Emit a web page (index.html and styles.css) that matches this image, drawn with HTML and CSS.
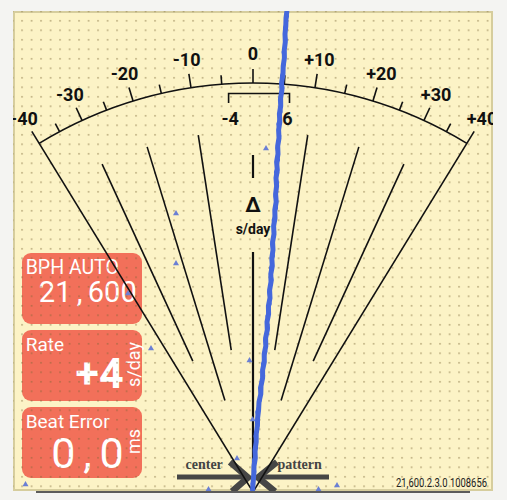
FILE: index.html
```html
<!DOCTYPE html>
<html>
<head>
<meta charset="utf-8">
<link rel="stylesheet" href="styles.css">
</head>
<body>
<div class="panel">
  <div class="cards">
    <div class="card">
      <div class="main">
        <div class="label label-bph">BPH AUTO</div>
        <div class="value v-bph">21<span class="sep">,</span>600</div>
      </div>
    </div>
    <div class="card">
      <div class="main">
        <div class="label">Rate</div>
        <div class="value v-rate">+4</div>
      </div>
      <div class="unit">s/day</div>
    </div>
    <div class="card">
      <div class="main">
        <div class="label">Beat Error</div>
        <div class="value v-beat">0<span class="sep">,</span>0</div>
      </div>
      <div class="unit">ms</div>
    </div>
  </div>

  <svg class="dial" viewBox="13 11 480 480" xmlns="http://www.w3.org/2000/svg">
    <defs>
      <pattern id="dots" x="21.2" y="19.9" width="9.5" height="9.5" patternUnits="userSpaceOnUse">
        <rect x="0" y="0" width="1.7" height="1.7" class="dot"/>
      </pattern>
    </defs>
    <rect x="13" y="11" width="480" height="480" fill="url(#dots)"/>

    <!-- bottom arrows -->
    <g class="arrows">
      <line x1="177" y1="477" x2="243" y2="477"/>
      <polyline points="230,462 248,477.5 232,491.5"/>
      <line x1="263" y1="477" x2="329" y2="477"/>
      <polyline points="277,462 258,477.5 275,491.5"/>
    </g>
    <text class="serif" x="185.5" y="469.3">center</text>
    <text class="serif" x="277.5" y="469.3">pattern</text>

    <!-- scale arc and ticks -->
    <g class="scale">
      <path d="M39.13 143.37 A409 409 0 0 1 466.87 143.37"/>
      <line x1="253" y1="83" x2="253" y2="69"/>
      <line x1="284.27" y1="84.20" x2="284.96" y2="75.22"/>
      <line x1="221.73" y1="84.20" x2="221.04" y2="75.22"/>
      <line x1="315.00" y1="87.73" x2="317.13" y2="73.89"/>
      <line x1="191.00" y1="87.73" x2="188.87" y2="73.89"/>
      <line x1="344.70" y1="93.41" x2="346.72" y2="84.64"/>
      <line x1="161.30" y1="93.41" x2="159.28" y2="84.64"/>
      <line x1="372.94" y1="100.98" x2="377.05" y2="87.59"/>
      <line x1="133.06" y1="100.98" x2="128.95" y2="87.59"/>
      <line x1="399.44" y1="110.11" x2="402.66" y2="101.71"/>
      <line x1="106.56" y1="110.11" x2="103.34" y2="101.71"/>
      <line x1="423.96" y1="120.45" x2="429.81" y2="107.73"/>
      <line x1="82.04" y1="120.45" x2="76.19" y2="107.73"/>
      <line x1="446.43" y1="131.63" x2="450.68" y2="123.70"/>
      <line x1="59.57" y1="131.63" x2="55.32" y2="123.70"/>
      <!-- outer fan lines -->
      <line x1="253" y1="492" x2="474.19" y2="131.44"/>
      <line x1="253" y1="492" x2="31.81" y2="131.44"/>
      <!-- inner fan lines -->
      <line x1="307.73" y1="135.17" x2="274.77" y2="350.06"/>
      <line x1="198.27" y1="135.17" x2="231.23" y2="350.06"/>
      <line x1="358.87" y1="146.87" x2="281.07" y2="400.51"/>
      <line x1="147.13" y1="146.87" x2="224.93" y2="400.51"/>
      <line x1="403.90" y1="164.05" x2="313.19" y2="361.18"/>
      <line x1="102.10" y1="164.05" x2="192.81" y2="361.18"/>
      <!-- bracket -->
      <path d="M228.6 103 V93.5 H289.5 V103"/>
    </g>
    <g class="center-line">
      <line x1="253" y1="155" x2="253" y2="178"/>
      <line x1="253" y1="252" x2="253" y2="492"/>
    </g>

    <g class="tick-label">
      <text x="253" y="60.4">0</text>
      <text x="186.6" y="65.5">-10</text>
      <text x="319.4" y="65.5">+10</text>
      <text x="124.55" y="79.6">-20</text>
      <text x="381.45" y="79.6">+20</text>
      <text x="69.92" y="100.5">-30</text>
      <text x="436.08" y="100.5">+30</text>
      <text x="23.97" y="125">-40</text>
      <text x="482.03" y="125">+40</text>
      <text x="230.1" y="124.6">-4</text>
      <text x="287.3" y="124.6">6</text>
    </g>
    <text class="delta" x="253" y="211.5">Δ</text>
    <text class="sday" x="253" y="233.6">s/day</text>

    <text class="version" x="396" y="486.5" textLength="91" lengthAdjust="spacingAndGlyphs">21,600.2.3.0 1008656</text>

    <!-- markers -->
    <g class="marks">
      <path d="M266 145 l3 5.2 h-6 z"/>
      <path d="M176 210 l3 5.2 h-6 z"/>
      <path d="M176 260 l3 5.2 h-6 z"/>
      <path d="M128 290 l3 5.2 h-6 z"/>
      <path d="M151 345 l3 5.2 h-6 z"/>
      <path d="M249.5 357 l3 5.2 h-6 z"/>
      <path d="M252.7 416 l3 5.2 h-6 z"/>
      <path d="M237 455 l3 5.2 h-6 z"/>
      <path d="M208.5 486 l3 5.2 h-6 z"/>
      <path d="M318.5 486 l3 5.2 h-6 z"/>
      <path d="M337 482 l3 5.2 h-6 z"/>
      <path d="M25.5 481 l3 5.2 h-6 z"/>
    </g>

    <!-- trace -->
    <polyline class="trace" points="286.8,12 286.0,18 285.8,26 285.0,34 285.3,42 284.3,50 284.4,58 283.2,66 283.0,74 281.6,83 281.9,90 280.6,98 280.7,106 279.4,114 279.8,122 278.6,130 279.0,138 277.7,146 278.0,154 276.6,162 277.3,170 276.0,178 276.6,186 275.6,194 276.2,202 274.8,210 275.0,218 273.6,226 274.0,234 272.6,242 273.0,250 271.8,258 272.3,266 270.8,274 271.0,282 269.6,290 270.0,298 268.4,306 268.6,314 267.0,322 267.3,330 265.6,338 265.8,346 264.2,354 264.3,362 262.6,370 262.6,378 261.0,386 260.8,394 259.0,402 258.6,410 257.6,418 257.4,426 256.2,434 256.2,442 255.0,450 255.3,458 254.0,466 253.8,474 253.2,482 252.6,490"/>
    <polyline class="trace-rough" points="288.0,16 284.0,28 286.5,40 282.6,52 285.0,64 281.0,76 283.4,88 279.0,100 281.5,112 277.3,124 280.2,136 276.4,148 279.0,160 275.0,172 278.0,184 274.5,196 277.0,208 272.7,220 275.1,232 271.1,244 273.9,256 270.0,268 272.6,280 268.2,292 270.6,304 266.5,316 268.9,328 264.2,340 266.3,352 262.0,364 264.1,376 259.1,388 260.8,400 256.3,412 258.8,424 254.6,436 257.1,448 253.1,460 255.3,472 251.5,484"/>
  </svg>
</div>
</body>
</html>
```

FILE: styles.css
```css
html, body {
  margin: 0;
  padding: 0;
}
body {
  background: #f4f4f2;
  width: 507px;
  height: 500px;
  font-family: Roboto, "Liberation Sans", sans-serif;
}
.panel {
  position: relative;
  box-sizing: border-box;
  width: 480px;
  height: 480px;
  margin: 11px 0 0 13px;
  border: 2px solid #d6cd9d;
  background: #fcf3c6;
  display: flex;
  flex-direction: column;
  justify-content: flex-end;
  padding: 0 0 11px 6.7px;
  box-shadow: 0 25px 0 -23px #5c5c5c;
}
.cards {
  display: flex;
  flex-direction: column;
  gap: 6px;
}
.card {
  box-sizing: border-box;
  width: 120px;
  height: 71px;
  border-radius: 9px;
  background: #f2705a;
  color: #fff;
  display: flex;
  padding: 5px 0 0 4px;
}
.main {
  flex: 1;
  display: flex;
  flex-direction: column;
  padding-right: 1px;
}
.label {
  font-size: 19px;
  line-height: 20px;
  white-space: nowrap;
}
.label-bph {
  font-size: 19.5px;
}
.value {
  text-align: right;
  white-space: nowrap;
}
.sep {
  display: inline-block;
  width: 0.5625em;
  text-align: center;
}
.v-bph {
  font-size: 29px;
  line-height: 28px;
  padding-right: 4px;
}
.v-rate {
  font-size: 43px;
  line-height: 40px;
  font-weight: 700;
  margin-top: -2px;
}
.v-beat {
  font-size: 43px;
  line-height: 42px;
}
.unit {
  align-self: center;
  writing-mode: vertical-rl;
  transform: rotate(180deg);
  font-size: 18px;
  line-height: 17px;
  margin-top: -7px;
}
.dial {
  position: absolute;
  top: -2px;
  left: -2px;
  width: 480px;
  height: 480px;
}
.dot {
  fill: rgba(120, 100, 50, 0.45);
}
.scale {
  fill: none;
  stroke: #111;
  stroke-width: 1.6;
}
.center-line {
  stroke: #111;
  stroke-width: 2.2;
}
.arrows {
  fill: none;
  stroke: #464646;
  stroke-width: 5;
  stroke-linejoin: miter;
}
.arrows polyline {
  stroke-width: 6.5;
}
.serif {
  font-family: "Liberation Serif", serif;
  font-weight: 700;
  font-size: 14px;
  fill: #444;
}
.tick-label {
  font-family: Roboto, "Liberation Sans", sans-serif;
  font-weight: 700;
  font-size: 18px;
  fill: #111;
  text-anchor: middle;
}
.delta {
  font-family: Roboto, "Liberation Sans", sans-serif;
  font-weight: 700;
  font-size: 21px;
  fill: #111;
  text-anchor: middle;
}
.sday {
  font-family: Roboto, "Liberation Sans", sans-serif;
  font-weight: 700;
  font-size: 14px;
  fill: #111;
  text-anchor: middle;
}
.version {
  font-family: Roboto, "Liberation Sans", sans-serif;
  font-size: 13px;
  fill: #222;
}
.marks {
  fill: #6a7fd4;
}
.trace {
  fill: none;
  stroke: #4568dc;
  stroke-width: 5;
  stroke-linejoin: round;
  stroke-linecap: round;
}
.trace-rough {
  fill: none;
  stroke: #4568dc;
  stroke-width: 2.2;
  stroke-linejoin: round;
  stroke-linecap: round;
}
```
